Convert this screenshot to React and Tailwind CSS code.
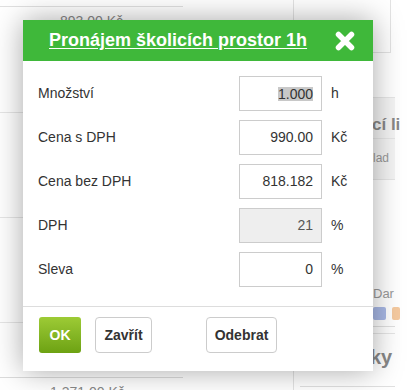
import React from "react";

const rows = [
  { label: "Množství", value: "1.000", unit: "h", selected: true },
  { label: "Cena s DPH", value: "990.00", unit: "Kč" },
  { label: "Cena bez DPH", value: "818.182", unit: "Kč" },
  { label: "DPH", value: "21", unit: "%", disabled: true },
  { label: "Sleva", value: "0", unit: "%" },
];

function CloseIcon() {
  return (
    <svg width="20" height="20" viewBox="0 0 20 20">
      <path
        d="M3.5 3.5 L16.5 16.5 M16.5 3.5 L3.5 16.5"
        stroke="white"
        strokeWidth="5.5"
        strokeLinecap="round"
      />
    </svg>
  );
}

function Row({ label, value, unit, selected, disabled }) {
  return (
    <div className="flex h-[35px] items-center">
      <div className="flex-1 text-[14px] text-[#333]">{label}</div>
      <div
        className={`flex h-[35px] w-[83px] items-center justify-end border border-[#ccc] pr-[8px] text-[14px] ${
          disabled ? "bg-[#eeeeee] text-[#555]" : "bg-white text-[#333]"
        }`}
      >
        <span className={selected ? "bg-[#c8c8c8] leading-[14px]" : ""}>{value}</span>
      </div>
      <div className="ml-[9px] w-[42px] text-[14px] text-[#333]">{unit}</div>
    </div>
  );
}

export default function App() {
  return (
    <div
      className="relative h-[390px] w-[407px] overflow-hidden bg-white"
      style={{ fontFamily: '"Liberation Sans", Arial, sans-serif' }}
    >
      {/* page behind the dialog */}
      <div className="flex h-full">
        <div className="w-[294px] border-r border-[#e3e3e3]">
          <div className="w-[183px]">
            <div className="h-[7px] border-b border-[#e0e0e0]"></div>
            <div className="h-[106px] border-b border-[#e6e6e6] pl-[60px] pt-[4px] text-[14px] text-[#888]">
              893.00 Kč
            </div>
            <div className="h-[105px] border-b border-[#e6e6e6]"></div>
            <div className="h-[105px] border-b border-[#e6e6e6]"></div>
            <div className="h-[55px] border-b border-[#dcdcdc]"></div>
            <div className="pl-[50px] pt-[4px] text-[14px] text-[#888]">1 371.00 Kč</div>
          </div>
        </div>
        <div className="flex-1 pl-[6px]">
          <div className="h-[53px] w-[91px] border-r border-b border-[#e3e3e3]"></div>
          <div className="mt-[44px] w-[95px] border-t border-[#e6e6e6] bg-[#f4f4f4] pt-[14px] pl-[72px] text-[17px] font-bold text-[#888] whitespace-nowrap">
            cí li
          </div>
          <div className="w-[95px] border-t border-[#e6e6e6] bg-[#f4f4f4] pt-[10px] pb-[12px] pl-[73px] text-[12px] text-[#999]">
            lad
          </div>
          <div className="w-[95px] border-t border-[#e6e6e6] pt-[104px] pl-[73px] text-[13px] text-[#999]">
            Dar
          </div>
          <div className="flex gap-[6px] pl-[73px] pt-[4px]">
            <div className="h-[13px] w-[13px] rounded-[2px] bg-[#a9b9e6]"></div>
            <div className="h-[13px] w-[8px] rounded-[2px] bg-[#f5caa0]"></div>
          </div>
          <div className="mt-[6px] w-[95px] border-t border-[#e0e0e0]"></div>
          <div className="mt-[6px] w-[95px] border-t border-[#e6e6e6] pt-[8px] pl-[70px] text-[20px] font-bold text-[#888]">
            ky
          </div>
          <div className="mt-[14px] ml-[0px] w-[95px] border-t border-[#e0e0e0]"></div>
        </div>
      </div>

      {/* dialog */}
      <div className="absolute left-[23px] top-[20px] w-[350px] bg-white shadow-[0_0_28px_rgba(0,0,0,0.35)]">
        <div className="flex h-[41px] items-center justify-between bg-[#3fb83a] pl-[26px] pr-[18px]">
          <span className="text-[18px] font-bold text-white underline underline-offset-[2px]">
            Pronájem školicích prostor 1h
          </span>
          <CloseIcon />
        </div>
        <div className="flex flex-col gap-[9px] pl-[15px] pt-[15px] pb-[19px]">
          {rows.map((r) => (
            <Row key={r.label} {...r} />
          ))}
        </div>
        <div className="flex border-t border-[#dddddd] pl-[16px] pt-[10px] pb-[18px]">
          <button className="h-[36px] w-[42px] rounded-[3px] bg-gradient-to-b from-[#9dcb35] to-[#6da212] text-[14px] font-bold text-white">
            OK
          </button>
          <button className="ml-[14px] h-[36px] w-[57px] rounded-[4px] border border-[#cccccc] bg-white text-[14px] font-bold text-[#333]">
            Zavřít
          </button>
          <button className="ml-[54px] h-[36px] w-[71px] rounded-[4px] border border-[#cccccc] bg-white text-[14px] font-bold text-[#333]">
            Odebrat
          </button>
        </div>
      </div>
    </div>
  );
}
